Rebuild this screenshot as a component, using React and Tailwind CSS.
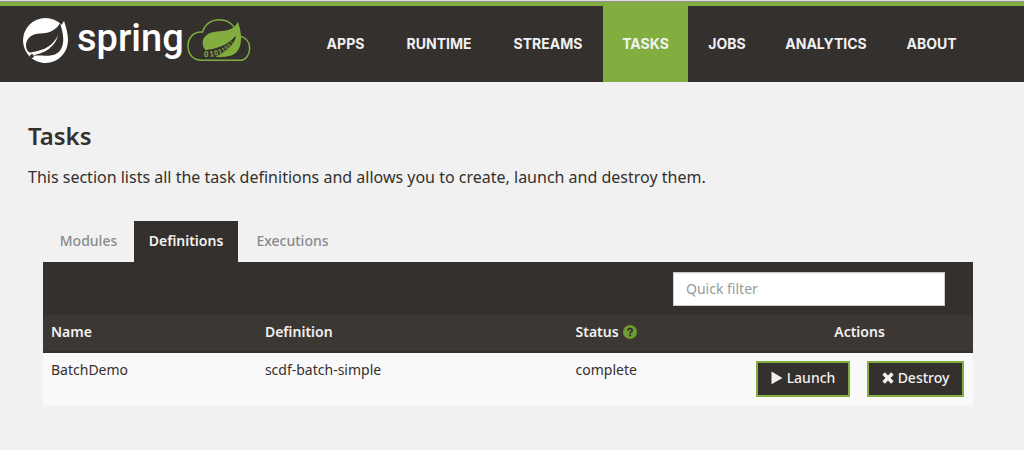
import React, { useState } from "react";

const navItems = [
  { label: "APPS", width: "w-[79px]" },
  { label: "RUNTIME", width: "w-[108px]" },
  { label: "STREAMS", width: "w-[110px]" },
  { label: "TASKS", width: "w-[85px]", active: true },
  { label: "JOBS", width: "w-[78px]" },
  { label: "ANALYTICS", width: "w-[120px]" },
  { label: "ABOUT", width: "w-[91px]" },
];

const tabs = [
  { label: "Modules", width: "w-[91px]" },
  { label: "Definitions", width: "w-[104px]", active: true },
  { label: "Executions", width: "w-[109px]" },
];

const tasks = [
  { name: "BatchDemo", definition: "scdf-batch-simple", status: "complete" },
];

function SpringMark() {
  return (
    <svg viewBox="0 0 24 24" className="size-[45px] fill-white" aria-hidden="true">
      <path d="M21.8537 1.4158a10.4504 10.4504 0 0 1-1.284 2.2471A11.9666 11.9666 0 1 0 3.8518 20.7757l.4445.3951a11.9543 11.9543 0 0 0 19.6316-8.2971c.3457-3.0126-.568-6.8649-2.0742-11.458zM5.5805 20.8745a1.0174 1.0174 0 1 1-.1482-1.4323 1.0396 1.0396 0 0 1 .1482 1.4323zm14.1991-3.5806c-2.9385 3.9263-9.2553 2.5928-13.276 2.7905 0 0-.7161.0494-1.4323.1481 0 0 .2716-.1234.6174-.2469 2.8398-.9877 4.1732-1.1853 5.9018-2.0743 3.2349-1.6545 6.4698-5.2844 7.1118-9.0379-1.2347 3.6053-4.9881 6.7167-8.3959 7.9761-2.3459.8643-6.5685 1.7039-6.5685 1.7039l-.1729-.0988c-2.8645-1.4076-2.9632-7.6304 2.2718-9.6306 2.2966-.889 4.4696-.395 6.9637-.9877 2.6422-.6174 5.7043-2.5929 6.939-5.1857 1.3828 4.1732 3.062 10.643.0493 14.6434z" />
    </svg>
  );
}

function CloudMark() {
  return (
    <svg viewBox="20 21 192 132" className="h-[44px] w-[64px]" aria-hidden="true">
      <path
        d="M162 49C151 33 135 26 117 26C92 26 72 41 67 63C42 60 23 79 23 105C23 130 39 148 64 148H177C197 148 208 131 208 112C208 94 197 80 180 76"
        fill="none"
        stroke="#81ae3f"
        strokeWidth="4.5"
      />
      <path
        d="M173 32C168 43 158 52 146 56C128 62 108 59 91 65C72 72 64 87 68 103C69 110 72 115 77 118C103 116 147 105 166 76C156 108 130 128 104 137C132 139 157 137 169 123C188 101 184 66 173 32Z"
        fill="#81ae3f"
      />
      <path d="M70 118C108 114 141 104 166 74C168 88 149 118 104 137L70 139Z" fill="#34302d" />
      <g fill="#81ae3f" fontFamily="Liberation Sans, sans-serif" fontWeight="700">
        <text transform="translate(71 138) rotate(-2)" fontSize="25">0</text>
        <text transform="translate(88 137) rotate(-7)" fontSize="24">1</text>
        <text transform="translate(103 134) rotate(-14)" fontSize="22">0</text>
        <text transform="translate(117 130) rotate(-22)" fontSize="20">1</text>
        <text transform="translate(128 124) rotate(-32)" fontSize="18">1</text>
        <text transform="translate(138 117) rotate(-38)" fontSize="17">0</text>
        <text transform="translate(147 109) rotate(-45)" fontSize="15">0</text>
        <text transform="translate(155 100) rotate(-52)" fontSize="13">1</text>
      </g>
    </svg>
  );
}

function HelpIcon() {
  return (
    <svg viewBox="0 0 14 14" className="size-[14px]" role="img" aria-label="Help">
      <circle cx="7" cy="7" r="7" fill="#6d9a31" />
      <path d="M4.9 5.5C4.9 2.9 9.2 3 9.2 5.3C9.2 6.9 7.1 6.8 7.1 8.4" fill="none" stroke="#34302d" strokeWidth="1.8" />
      <path d="M6.1 9.4h2v1.8h-2z" fill="#34302d" />
    </svg>
  );
}

function PlayIcon() {
  return (
    <svg viewBox="0 0 12 14" className="h-[14px] w-[12px] fill-[#f1f1f1]" aria-hidden="true">
      <path d="M.5 .5L11.5 7L.5 13.2Z" />
    </svg>
  );
}

function CrossIcon() {
  return (
    <svg viewBox="0 0 12 12" className="size-[12px]" aria-hidden="true">
      <path d="M1.6 1.6L10.4 10.4M10.4 1.6L1.6 10.4" stroke="#f1f1f1" strokeWidth="3.6" />
    </svg>
  );
}

function ActionButton({ icon, className, children }) {
  return (
    <button
      type="button"
      className={
        "flex h-9 items-center justify-center gap-1 border-2 border-[#81ae3f] bg-[#34302d] pb-[2px] text-sm font-medium text-[#f1f1f1] " +
        className
      }
    >
      {icon}
      {children}
    </button>
  );
}

export default function App() {
  const [filter, setFilter] = useState("");
  const rows = tasks.filter((t) => t.name.toLowerCase().includes(filter.toLowerCase()));

  return (
    <div className="min-h-screen bg-[#f1f1f1] font-['Noto_Sans',sans-serif] text-[#34302d]">
      <div className="h-[2px] border-b border-[#8f9389] bg-[#dedede]" />
      <header className="flex h-20 border-t-4 border-[#81ae3f] bg-[#34302d]">
        <a href="#home" aria-label="Spring" className="flex w-[306px] shrink-0 items-start pt-3 pl-[23px]">
          <SpringMark />
          <span className="w-[119px] pl-[9px] font-['Roboto',sans-serif] text-[38px] leading-10 font-medium text-white">
            spring
          </span>
          <CloudMark />
        </a>
        <nav className="flex font-['Inter',sans-serif] text-sm font-bold text-[#f1f1f1]">
          {navItems.map((item) => (
            <a
              key={item.label}
              href={"#" + item.label.toLowerCase()}
              aria-current={item.active ? "page" : undefined}
              className={
                "flex items-center justify-center " + item.width + (item.active ? " bg-[#81ae3f]" : "")
              }
            >
              {item.label}
            </a>
          ))}
        </nav>
      </header>

      <main className="px-7 pt-10">
        <h1 className="text-2xl leading-7 font-semibold">Tasks</h1>
        <p className="pt-[15px] text-base leading-6">
          This section lists all the task definitions and allows you to create, launch and destroy them.
        </p>

        <section className="mt-8 mr-[23px] ml-[15px]">
          <div role="tablist" className="flex text-sm">
            {tabs.map((tab) => (
              <button
                key={tab.label}
                type="button"
                role="tab"
                aria-selected={Boolean(tab.active)}
                className={
                  "h-[41px] pb-[2px] " +
                  tab.width +
                  (tab.active ? " bg-[#34302d] font-semibold text-[#f1f1f1]" : " font-medium text-[#888b8d]")
                }
              >
                {tab.label}
              </button>
            ))}
          </div>

          <div className="flex h-[53px] items-start justify-end bg-[#34302d] pt-[10px] pr-7">
            <input
              type="text"
              aria-label="Quick filter"
              placeholder="Quick filter"
              value={filter}
              onChange={(e) => setFilter(e.target.value)}
              className="h-[34px] w-[272px] border border-[#cccccc] bg-white px-3 pb-[2px] text-sm shadow-[inset_0_1px_1px_rgba(0,0,0,0.075)] placeholder:text-[#999999]"
            />
          </div>

          <table className="w-full table-fixed text-left text-sm">
            <colgroup>
              <col className="w-[23%]" />
              <col className="w-[33.4%]" />
              <col className="w-[19.2%]" />
              <col className="w-[24.4%]" />
            </colgroup>
            <thead className="border-b-2 border-[#34302d] bg-[#3b3733] text-[#f1f1f1]">
              <tr className="h-[37px]">
                <th className="px-2 pb-[2px] font-semibold">Name</th>
                <th className="px-2 pb-[2px] font-semibold">Definition</th>
                <th className="px-2 pb-[2px] font-semibold">
                  <span className="flex items-center gap-1">
                    Status
                    <HelpIcon />
                  </span>
                </th>
                <th className="px-2 pb-[2px] text-center font-semibold">Actions</th>
              </tr>
            </thead>
            <tbody className="bg-[#f9f9f9]">
              {rows.map((task) => (
                <tr key={task.name} className="align-top">
                  <td className="px-2 py-[7px]">{task.name}</td>
                  <td className="px-2 py-[7px]">{task.definition}</td>
                  <td className="px-2 py-[7px]">{task.status}</td>
                  <td className="py-2 pr-[9px]">
                    <div className="flex justify-end gap-[17px]">
                      <ActionButton className="w-[94px]" icon={<PlayIcon />}>
                        Launch
                      </ActionButton>
                      <ActionButton className="w-[97px]" icon={<CrossIcon />}>
                        Destroy
                      </ActionButton>
                    </div>
                  </td>
                </tr>
              ))}
            </tbody>
          </table>
        </section>
      </main>
    </div>
  );
}
